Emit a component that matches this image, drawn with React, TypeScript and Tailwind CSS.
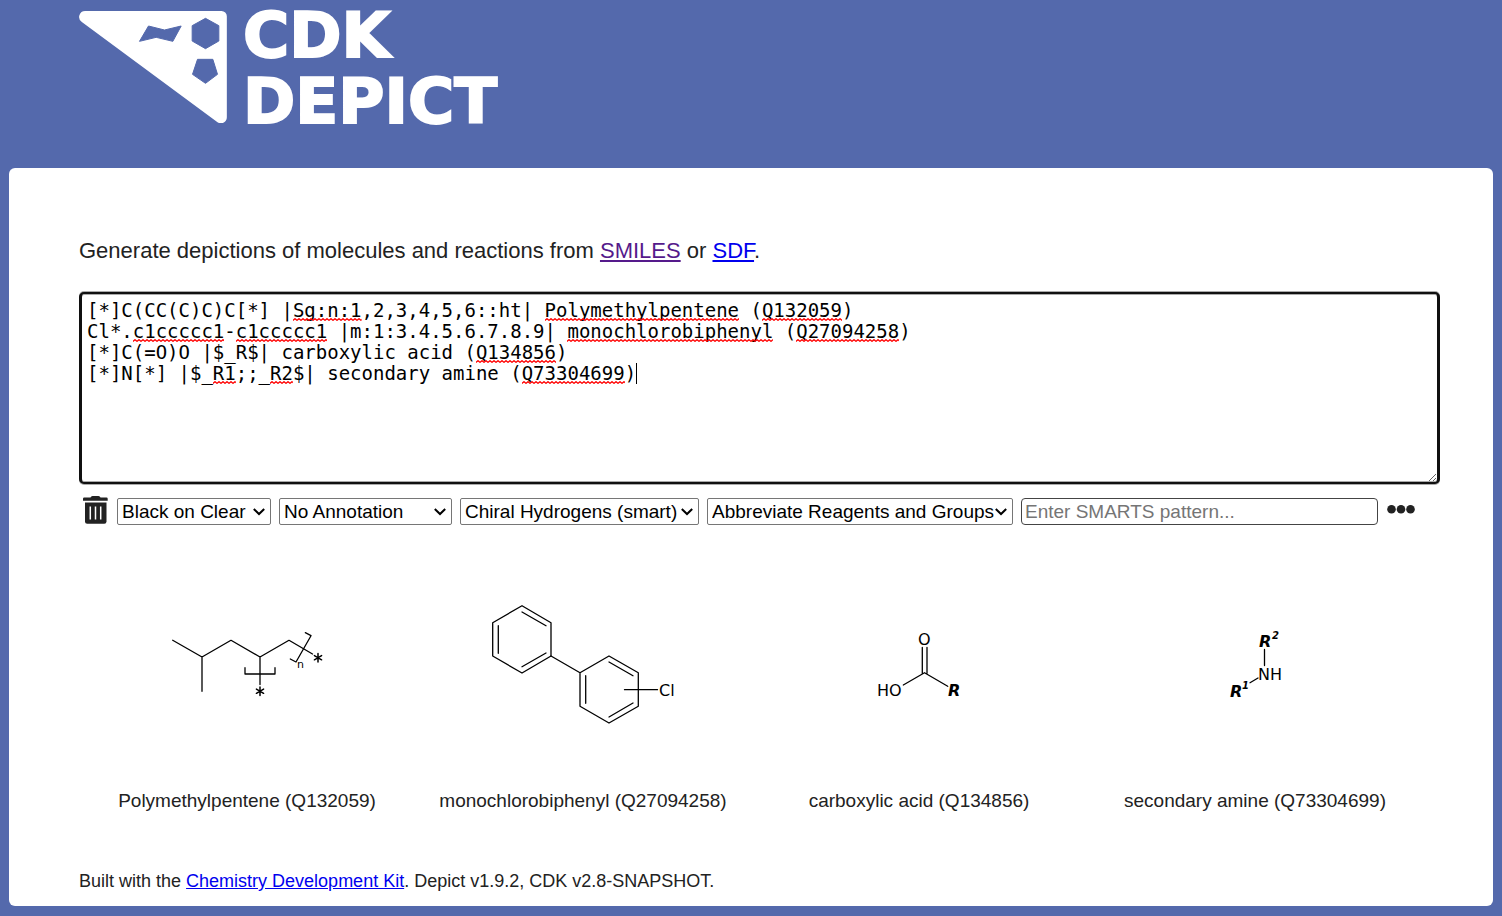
import React from "react";

const SMILES = [
  "[*]C(CC(C)C)C[*] |Sg:n:1,2,3,4,5,6::ht| Polymethylpentene (Q132059)",
  "Cl*.c1ccccc1-c1ccccc1 |m:1:3.4.5.6.7.8.9| monochlorobiphenyl (Q27094258)",
  "[*]C(=O)O |$_R$| carboxylic acid (Q134856)",
  "[*]N[*] |$_R1;;_R2$| secondary amine (Q73304699)",
];

// Spelling marks: line, first character, number of characters.
const MARKS = [
  [0, 18, 6],
  [0, 40, 17],
  [0, 59, 7],
  [1, 4, 8],
  [1, 13, 8],
  [1, 42, 18],
  [1, 62, 9],
  [2, 34, 7],
  [3, 11, 2],
  [3, 16, 2],
  [3, 38, 9],
];

const LINE_HEIGHT = 21;

function Logo() {
  return (
    <svg viewBox="0 0 443 336" className="h-28 w-37 shrink-0" aria-hidden="true">
      <path
        d="M18 0H427A16 16 0 0 1 443 16V318A18 18 0 0 1 413 332L8 33A18 18 0 0 1 18 0Z"
        fill="#fff"
      />
      <g fill="#5469ac" stroke="#5469ac" strokeWidth="3" strokeLinejoin="round">
        <path d="M208 45L256 57L306 45L281 91L231 79L181 91Z" />
        <path d="M379 22L419 44V90L379 113L339 90V44Z" />
        <path d="M355 145H401L415 190L379 217L340 190Z" />
      </g>
    </svg>
  );
}

function SpellingMarks() {
  return (
    <div
      aria-hidden="true"
      className="pointer-events-none absolute top-2 left-2 font-['DejaVu_Sans_Mono',monospace] text-[19px]"
    >
      <svg className="absolute size-0">
        <defs>
          <pattern id="wave" width="4" height="3" patternUnits="userSpaceOnUse">
            <path d="M-1 1.5L0 2.3L2 0.7L4 2.3L5 1.5" fill="none" stroke="#f00" strokeWidth="1.3" />
          </pattern>
        </defs>
      </svg>
      {MARKS.map(([line, start, length]) => (
        <svg
          key={`${line}-${start}`}
          className="absolute h-[3px]"
          style={{ left: `${start}ch`, top: line * LINE_HEIGHT + 18, width: `${length}ch` }}
        >
          <rect width="100%" height="3" fill="url(#wave)" />
        </svg>
      ))}
      <span
        className="absolute h-[21px] w-px bg-black"
        style={{ left: `${SMILES[3].length}ch`, top: 3 * LINE_HEIGHT }}
      />
    </div>
  );
}

function Select({ label, value, className }: { label: string; value: string; className: string }) {
  return (
    <div className={`relative ${className}`}>
      <select
        aria-label={label}
        className="block h-[27px] w-full appearance-none rounded-xs border border-[#767676] bg-white pl-1 leading-6 text-black"
      >
        <option>{value}</option>
      </select>
      <svg
        viewBox="0 0 12 8"
        aria-hidden="true"
        className="pointer-events-none absolute top-2.5 right-1.5 h-2 w-3"
      >
        <path d="M0.8 1L6 6L11.2 1" fill="none" stroke="#000" strokeWidth="2" />
      </svg>
    </div>
  );
}

function Drawing({ label, children }: { label: string; children: React.ReactNode }) {
  return (
    <svg
      viewBox="0 0 336 200"
      role="img"
      aria-label={label}
      className="h-[200px] w-full font-['DejaVu_Sans',sans-serif] text-[16px]"
    >
      <g fill="none" stroke="#000" strokeWidth="1.3" strokeLinecap="round" strokeLinejoin="round">
        {children}
      </g>
    </svg>
  );
}

function Atom({ x, y, className = "", children }: { x: number; y: number; className?: string; children: string }) {
  return (
    <text x={x} y={y} fill="#000" stroke="none" className={className}>
      {children}
    </text>
  );
}

const MOLECULES = [
  {
    title: "Polymethylpentene (Q132059)",
    drawing: (
      <>
        <path d="M93.7 75.3L123 92L152 75.3L181 92L210 75.3L233.5 89M123 92V126.3M181 92V119.5" />
        <path d="M166 102.7V109H196V102.7M226.3 67.7L232 70.7L217 97L211.3 94" />
        <path
          strokeWidth="1.5"
          d="M181 122V130.4M177.4 124.1L184.6 128.3M184.6 124.1L177.4 128.3M239 88.5V96.9M235.4 90.6L242.6 94.8M242.6 90.6L235.4 94.8"
        />
        <Atom x={218} y={103} className="text-[11px]">n</Atom>
      </>
    ),
  },
  {
    title: "monochlorobiphenyl (Q27094258)",
    drawing: (
      <>
        <path d="M107 40.7L136 57.7V91L107 108L77.7 91V57.7ZM107 47L131 60.7M131 88L107 101.7M83.3 60.7V88.3" />
        <path d="M136 91L165 107.7L194 91L223.3 107.7V141.3L194 158L165 141.3V107.7M194 97L218 110.7M218 138L194 152M170.7 110.7V138.3" />
        <path d="M209.5 124.7H242.5" />
        <Atom x={244} y={131}>Cl</Atom>
      </>
    ),
  },
  {
    title: "carboxylic acid (Q134856)",
    drawing: (
      <>
        <path d="M152.3 120L173.5 107.7L196.7 121.3M171.3 82.5V108.5M176 82.5V108.5" />
        <Atom x={167} y={80}>O</Atom>
        <Atom x={126} y={131}>HO</Atom>
        <Atom x={197} y={131} className="font-bold italic">R</Atom>
      </>
    ),
  },
  {
    title: "secondary amine (Q73304699)",
    drawing: (
      <>
        <path d="M177.5 84.5V100.5M163 117.7L171 113" />
        <Atom x={172} y={82} className="font-bold italic">R</Atom>
        <Atom x={185} y={74} className="text-[10px] font-bold italic">2</Atom>
        <Atom x={171} y={115}>NH</Atom>
        <Atom x={143} y={132} className="font-bold italic">R</Atom>
        <Atom x={155} y={124} className="text-[10px] font-bold italic">1</Atom>
      </>
    ),
  },
];

export default function App() {
  return (
    <div className="min-h-screen bg-[#5469ac] px-[9px] pb-2.5 font-['Liberation_Sans',Arial,sans-serif] text-[19px] text-[#222]">
      <header className="flex h-[168px] items-start gap-4 px-[70px] pt-[11px]">
        <Logo />
        <h1 className="-mt-2 font-['Arial_Black','DejaVu_Sans',sans-serif] text-[63px] leading-[66px] font-black text-white [-webkit-text-stroke:2px_#fff]">
          CDK
          <br />
          DEPICT
        </h1>
      </header>

      <main className="rounded-md bg-white pt-[69px] pr-[53px] pb-[13px] pl-[70px]">
        <p className="text-[22px] leading-7">
          Generate depictions of molecules and reactions from{" "}
          <a href="#smiles" className="text-[#551a8b] underline">SMILES</a> or{" "}
          <a href="#sdf" className="text-[#0000ee] underline">SDF</a>.
        </p>

        <div className="relative mt-[27px]">
          <textarea
            aria-label="SMILES or SDF input"
            spellCheck={false}
            defaultValue={SMILES.join("\n")}
            className="block h-48 w-full resize rounded-[5px] border-x-3 border-y-2 border-[#101010] bg-white px-[5px] py-1.5 font-['DejaVu_Sans_Mono',monospace] text-[19px] leading-[21px] text-black shadow-[0_-1px_0_#aaa,0_1px_0_#aaa,inset_0_1px_0_#aaa,inset_0_-1px_0_#aaa] outline-none"
          />
          <SpellingMarks />
        </div>

        <div className="mt-3 mr-6 flex items-start gap-2">
          <button type="button" aria-label="Clear" className="ml-1 w-[26px]">
            <svg viewBox="0 0 26 29" className="h-[29px] w-[26px]" aria-hidden="true">
              <path d="M7.5 1.5Q8 0 9.5 0H15.5Q17 0 17.5 1.5H23.5Q24.7 1.5 24.7 2.7V4.7H0V2.7Q0 1.5 1.2 1.5Z" fill="#222" />
              <path d="M2 6.5H23.5V25.5Q23.5 27.7 21.3 27.7H4.2Q2 27.7 2 25.5Z" fill="#222" />
              <path d="M7.3 10.5V23.5M12.5 10.5V23.5M17.7 10.5V23.5" stroke="#fff" strokeWidth="1.5" />
            </svg>
          </button>
          <div className="mt-0.5 flex min-w-0 flex-1 gap-2">
            <Select label="Style" value="Black on Clear" className="w-[154px]" />
            <Select label="Annotation" value="No Annotation" className="w-[173px]" />
            <Select label="Hydrogens" value="Chiral Hydrogens (smart)" className="w-[239px]" />
            <Select label="Abbreviations" value="Abbreviate Reagents and Groups" className="w-[306px]" />
            <input
              type="text"
              aria-label="SMARTS pattern"
              placeholder="Enter SMARTS pattern..."
              className="h-[27px] min-w-0 flex-1 rounded-sm border border-[#444] bg-white px-[3px] pt-0.5 text-black placeholder:text-[#757575]"
            />
          </div>
          <button type="button" aria-label="More options" className="mt-2">
            <svg viewBox="0 0 30 10" className="h-2.5 w-[30px]" aria-hidden="true" fill="#222">
              <circle cx="5.5" cy="5.3" r="4.3" />
              <circle cx="15" cy="5.3" r="4.3" />
              <circle cx="24.5" cy="5.3" r="4.3" />
            </svg>
          </button>
        </div>

        <ul className="mt-10 mr-[17px] grid grid-cols-4">
          {MOLECULES.map(({ title, drawing }) => (
            <li key={title} className="text-center">
              <Drawing label={title}>{drawing}</Drawing>
              <p className="mt-6 text-[19px] leading-6">{title}</p>
            </li>
          ))}
        </ul>

        <footer className="mt-14 text-[18px] leading-6">
          Built with the{" "}
          <a href="#cdk" className="text-[#0000ee] underline">Chemistry Development Kit</a>. Depict
          v1.9.2, CDK v2.8-SNAPSHOT.
        </footer>
      </main>
    </div>
  );
}
